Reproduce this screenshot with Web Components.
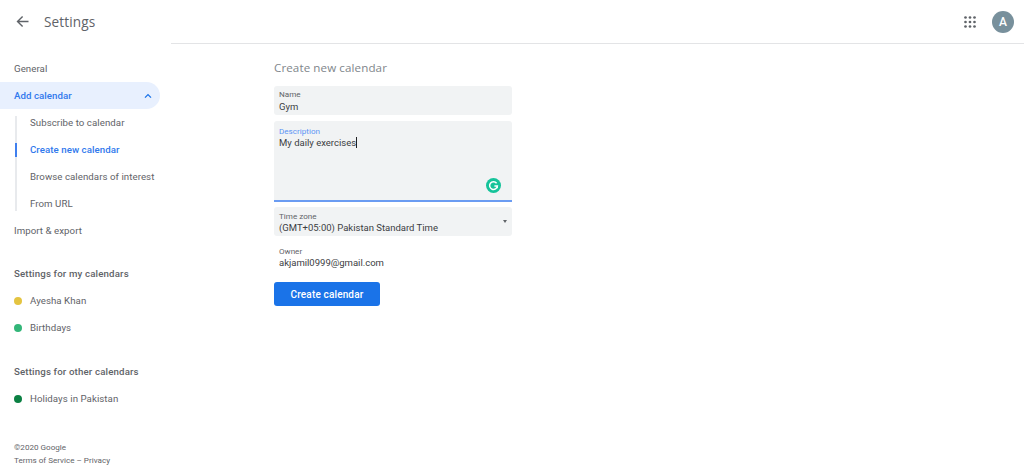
<!DOCTYPE html>
<html>
<head>
<meta charset="utf-8">
<title>Settings</title>
<style>
  html, body { margin: 0; height: 100%; background: #fff; overflow: hidden; }
  body { font-family: Roboto, "Liberation Sans", sans-serif; color: #3c4043; }
</style>
</head>
<body>
<settings-app>
  <app-header slot="header"></app-header>
  <side-nav slot="nav"></side-nav>
  <calendar-form slot="main"></calendar-form>
</settings-app>

<script>
class SettingsApp extends HTMLElement {
  constructor() {
    super();
    this.attachShadow({ mode: 'open' });
    this.shadowRoot.innerHTML = `
      <style>
        :host { display: grid; grid-template-columns: 171px 1fr; grid-template-rows: 44px 425px; width: 1024px; height: 469px; }
        .top { grid-column: 1 / 3; }
      </style>
      <div class="top"><slot name="header"></slot></div>
      <slot name="nav"></slot>
      <slot name="main"></slot>
    `;
  }
}
customElements.define('settings-app', SettingsApp);

class AppHeader extends HTMLElement {
  constructor() {
    super();
    this.attachShadow({ mode: 'open' });
    let dots = '';
    [0, 4.5, 9].forEach(y => {
      [0, 4.5, 9].forEach(x => {
        dots += `<circle cx="${x + 1.5}" cy="${y + 1.5}" r="1.35"/>`;
      });
    });
    this.shadowRoot.innerHTML = `
      <style>
        :host { display: block; height: 44px; box-sizing: border-box; position: relative; }
        :host::after { content: ''; position: absolute; left: 171px; right: 0; bottom: 0; height: 1px; background: #e3e4e6; }
        .bar { display: flex; align-items: center; height: 43px; padding: 0 10px 0 16px; }
        .back { width: 13px; height: 13px; margin-right: 15px; }
        h1 { flex: 1; margin: 0; font: 400 13.6px "Open Sans", Roboto, sans-serif; color: #5f6368; letter-spacing: .1px; }
        .apps { width: 12px; height: 12px; margin-right: 16px; fill: #5f6368; }
        .avatar { width: 22px; height: 22px; border-radius: 50%; background: #78909c; color: #fff; font: 500 12px/22px Roboto, sans-serif; text-align: center; }
      </style>
      <div class="bar">
        <svg class="back" viewBox="0 0 13 13"><path d="M12.5 6.5H2M6.6 1.4 1.5 6.5l5.1 5.1" fill="none" stroke="#5f6368" stroke-width="1.4"/></svg>
        <h1>Settings</h1>
        <svg class="apps" viewBox="0 0 12 12">${dots}</svg>
        <div class="avatar">A</div>
      </div>
    `;
  }
}
customElements.define('app-header', AppHeader);

class NavItem extends HTMLElement {
  constructor() {
    super();
    this.attachShadow({ mode: 'open' });
  }
  connectedCallback() {
    const dot = this.getAttribute('dot');
    this.shadowRoot.innerHTML = `
      <style>
        :host { display: flex; align-items: center; position: relative; height: 27px; padding-left: 14px; box-sizing: border-box; font-size: 9.7px; color: #5f6368; white-space: nowrap; letter-spacing: .05px; }
        :host([sub]) { padding-left: 30px; }
        :host([sub][active])::before { content: ''; position: absolute; left: 15px; top: 7px; bottom: 6px; width: 2px; background: #3f7fee; }
        :host([active]) { color: #3079ed; font-weight: 500; }
        :host([open]) { background: #e8f0fe; color: #3079ed; font-weight: 500; width: 160px; border-radius: 0 14px 14px 0; justify-content: space-between; padding-right: 8px; }
        .dot { width: 8px; height: 8px; border-radius: 50%; margin-right: 8px; }
        svg { width: 8px; height: 6px; }
      </style>
      ${dot ? `<span class="dot" style="background:${dot}"></span>` : ''}
      <span><slot></slot></span>
      ${this.hasAttribute('open') ? '<svg viewBox="0 0 8 6"><path d="M1 4.6 4 1.6l3 3" fill="none" stroke="#1a73e8" stroke-width="1.3"/></svg>' : ''}
    `;
  }
}
customElements.define('nav-item', NavItem);

class SideNav extends HTMLElement {
  constructor() {
    super();
    this.attachShadow({ mode: 'open' });
    this.shadowRoot.innerHTML = `
      <style>
        :host { display: block; padding-top: 11px; box-sizing: border-box; height: 425px; }
        h2 { margin: 0; height: 27px; padding-left: 14px; font: 500 9.7px/27px Roboto, sans-serif; color: #5f6368; letter-spacing: .15px; white-space: nowrap; }
        h2.first { margin-top: 16px; }
        h2.next { margin-top: 17px; }
        .group { position: relative; }
        .group::before { content: ''; position: absolute; left: 15px; top: 7px; bottom: 6px; width: 2px; background: #e8eaed; }
        footer { margin-top: 29px; padding-left: 14px; font-size: 8.1px; line-height: 13px; color: #5f6368; white-space: nowrap; }
      </style>
      <nav-item>General</nav-item>
      <nav-item open>Add calendar</nav-item>
      <div class="group">
        <nav-item sub>Subscribe to calendar</nav-item>
        <nav-item sub active>Create new calendar</nav-item>
        <nav-item sub>Browse calendars of interest</nav-item>
        <nav-item sub>From URL</nav-item>
      </div>
      <nav-item>Import &amp; export</nav-item>
      <h2 class="first">Settings for my calendars</h2>
      <nav-item dot="#e4c441">Ayesha Khan</nav-item>
      <nav-item dot="#33b679">Birthdays</nav-item>
      <h2 class="next">Settings for other calendars</h2>
      <nav-item dot="#0b8043">Holidays in Pakistan</nav-item>
      <footer>©2020 Google<br>Terms of Service – Privacy</footer>
    `;
  }
}
customElements.define('side-nav', SideNav);

class FormField extends HTMLElement {
  constructor() {
    super();
    this.attachShadow({ mode: 'open' });
    this.shadowRoot.innerHTML = `
      <style>
        :host { display: block; position: relative; box-sizing: border-box; width: 238px; height: 29px; padding: 4px 5px 0; background: #f1f3f4; border-radius: 3px; color: #3c4043; }
        :host([plain]) { background: none; }
        :host([focused]) { border-radius: 3px 3px 0 0; border-bottom: 2px solid #6b9cf2; }
        .label { font-size: 8.1px; line-height: 10px; color: #5f6368; }
        :host([focused]) .label { color: #5c94f5; }
        .value { margin-top: var(--value-gap, 0); font-size: 9.5px; line-height: 13px; white-space: nowrap; }
      </style>
      <div class="label"><slot name="label"></slot></div>
      <div class="value"><slot></slot></div>
      <slot name="extra"></slot>
    `;
  }
}
customElements.define('form-field', FormField);

class CalendarForm extends HTMLElement {
  constructor() {
    super();
    this.attachShadow({ mode: 'open' });
    this.shadowRoot.innerHTML = `
      <style>
        :host { display: block; padding: 16px 0 0 103px; }
        h2 { margin: 0 0 10px; font: 400 11.6px/16px "Open Sans", Roboto, sans-serif; color: #80868b; letter-spacing: .1px; }
        .name { margin-bottom: 6px; padding-top: 3px; --value-gap: 1px; }
        .desc { height: 81px; margin-bottom: 5px; padding-top: 5px; }
        .owner { height: 38px; padding-top: 10px; }
        .caret { display: inline-block; width: 1px; height: 11px; background: #202124; vertical-align: -2px; }
        .grammarly { position: absolute; right: 11px; bottom: 7px; width: 15px; height: 15px; }
        .arrow { position: absolute; right: 5px; top: 13px; width: 0; height: 0; border: 2.5px solid transparent; border-top: 3px solid #5f6368; border-bottom: 0; }
        button { display: block; width: 106px; height: 24px; margin-top: 8px; padding: 0; border: 0; border-radius: 3px; background: #1a73e8; color: #fff; font: 500 10px Roboto, sans-serif; letter-spacing: .15px; }
      </style>
      <h2>Create new calendar</h2>
      <form-field class="name"><span slot="label">Name</span>Gym</form-field>
      <form-field class="desc" focused><span slot="label">Description</span>My daily exercises<span class="caret"></span>
        <svg slot="extra" class="grammarly" viewBox="0 0 15 15"><circle cx="7.5" cy="7.5" r="7.5" fill="#15c39a"/><path d="M10.6 5.2A3.9 3.9 0 1 0 11.4 8H8.4M11.2 8v2.2" fill="none" stroke="#fff" stroke-width="1.5"/></svg>
      </form-field>
      <form-field><span slot="label">Time zone</span>(GMT+05:00) Pakistan Standard Time<span slot="extra" class="arrow"></span></form-field>
      <form-field class="owner" plain><span slot="label">Owner</span>akjamil0999@gmail.com</form-field>
      <button>Create calendar</button>
    `;
  }
}
customElements.define('calendar-form', CalendarForm);
</script>
</body>
</html>
